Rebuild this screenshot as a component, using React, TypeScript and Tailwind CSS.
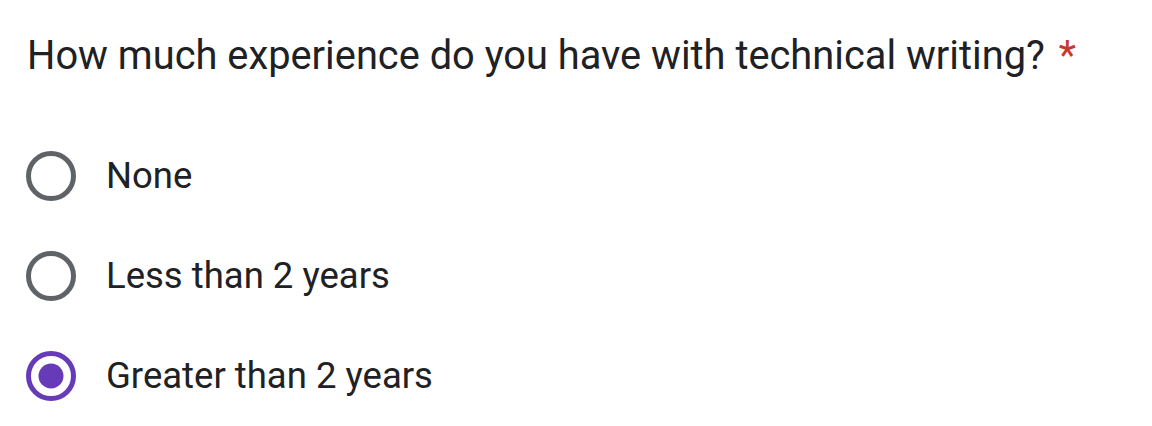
import React from "react";

function Radio({ checked }: { checked?: boolean }) {
  return (
    <svg width="50" height="50" viewBox="0 0 50 50" className="shrink-0">
      <circle cx="25" cy="25" r="22.5" fill="none" stroke={checked ? "#673ab7" : "#5f6368"} strokeWidth="5" />
      {checked && <circle cx="25" cy="25" r="12.5" fill="#673ab7" />}
    </svg>
  );
}

export default function App() {
  const options = [
    { label: "None", checked: false },
    { label: "Less than 2 years", checked: false },
    { label: "Greater than 2 years", checked: true },
  ];
  return (
    <div className="w-[1152px] h-[426px] bg-white" style={{ fontFamily: "Roboto, sans-serif" }}>
      <div className="pl-[27px] pt-[30px]">
        <div className="text-[39.8px] leading-[52px] text-[#202124] flex">
          <span>How much experience do you have with technical writing?</span>
          <span className="text-[#c9372c] ml-[14px]">*</span>
        </div>
        <div className="mt-[69px] flex flex-col gap-[50px]">
          {options.map((o) => (
            <div key={o.label} className="flex items-center h-[50px] -ml-[1px]">
              <Radio checked={o.checked} />
              <span className="ml-[30px] text-[36.5px] text-[#202124]">{o.label}</span>
            </div>
          ))}
        </div>
      </div>
    </div>
  );
}
